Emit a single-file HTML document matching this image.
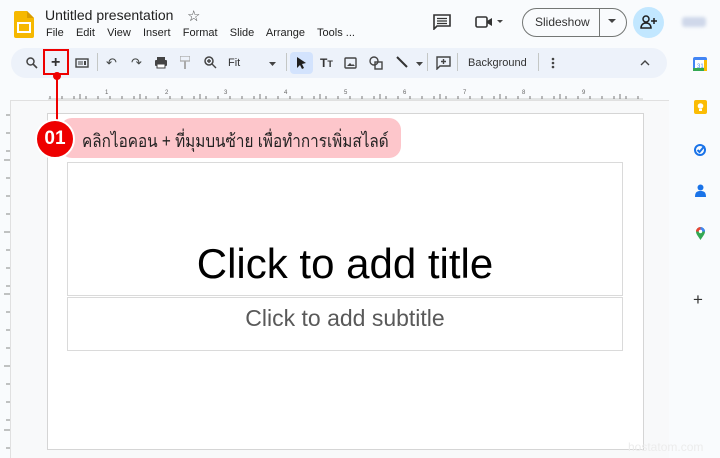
<!DOCTYPE html>
<html><head><meta charset="utf-8"><style>
*{margin:0;padding:0;box-sizing:border-box}
body{width:720px;height:458px;overflow:hidden;background:#f9fbfd;font-family:"Liberation Sans",Arial,sans-serif;position:relative;color:#444746}
.a{position:absolute}
.ic{position:absolute;font-size:13px;color:#444746}
svg{position:absolute}
</style></head><body>
<svg style="left:14px;top:11px" width="20" height="27" viewBox="0 0 20 27"><path d="M2 0h11l7 7v18a2 2 0 0 1-2 2H2a2 2 0 0 1-2-2V2a2 2 0 0 1 2-2z" fill="#f6b800"/><path d="M13 0v7h7z" fill="#d99c00"/><rect x="4" y="12" width="12" height="9" fill="none" stroke="#fff" stroke-width="2"/></svg>
<div class="a" style="left:45px;top:7px;font-size:14px;color:#1f1f1f">Untitled presentation</div>
<div class="a" style="left:187px;top:7px;font-size:15px;color:#444">☆</div>
<div class="a" style="left:46px;top:27px;font-size:11px;color:#1f1f1f;word-spacing:0">File&nbsp;&nbsp;&nbsp; Edit&nbsp;&nbsp;&nbsp; View&nbsp;&nbsp;&nbsp; Insert&nbsp;&nbsp;&nbsp; Format&nbsp;&nbsp;&nbsp; Slide&nbsp;&nbsp;&nbsp; Arrange&nbsp;&nbsp;&nbsp; Tools ...</div>
<svg style="left:433px;top:14px" width="18" height="16" viewBox="0 0 18 16"><path d="M1 1h16v11H4l-3 3z" fill="none" stroke="#333" stroke-width="1.6"/><path d="M4 4.5h10M4 7h10M4 9.5h10" stroke="#333" stroke-width="1.2"/></svg>
<svg style="left:475px;top:15px" width="30" height="14" viewBox="0 0 30 14"><rect x="1" y="2" width="11" height="10" rx="1.5" fill="none" stroke="#333" stroke-width="1.6"/><path d="M12 6l5-3v8l-5-3z" fill="#333"/><path d="M22 5h6l-3 3z" fill="#444"/></svg>
<div class="a" style="left:522px;top:8px;width:105px;height:29px;border:1px solid #747775;border-radius:15px"></div>
<div class="a" style="left:599px;top:8px;width:1px;height:29px;background:#747775"></div>
<div class="a" style="left:535px;top:15px;font-size:12px;color:#333">Slideshow</div>
<svg style="left:608px;top:19px" width="8" height="5"><path d="M0 0h8l-4 4z" fill="#444"/></svg>
<div class="a" style="left:633px;top:7px;width:31px;height:31px;border-radius:50%;background:#c2e7ff"></div>
<svg style="left:640px;top:15px" width="18" height="14" viewBox="0 0 18 14"><circle cx="6" cy="4" r="3" fill="none" stroke="#1f1f1f" stroke-width="1.5"/><path d="M1 13c0-3 2-5 5-5s5 2 5 5z" fill="none" stroke="#1f1f1f" stroke-width="1.5"/><path d="M14 3v6M11 6h6" stroke="#1f1f1f" stroke-width="1.5"/></svg>
<div class="a" style="left:682px;top:17px;width:24px;height:10px;background:#cfd8ea;border-radius:3px;filter:blur(1.5px)"></div>
<div class="a" style="left:11px;top:48px;width:656px;height:30px;border-radius:15px;background:#edf2fa"></div>
<svg style="left:26px;top:57px" width="12" height="12" viewBox="0 0 12 12"><circle cx="4.5" cy="4.5" r="3.5" fill="none" stroke="#444" stroke-width="1.5"/><path d="M7 7l4 4" stroke="#444" stroke-width="1.6"/></svg>
<div class="a" style="left:51px;top:54px;font-size:16px;color:#333;font-weight:bold">+</div>
<div class="a" style="left:43px;top:49px;width:26px;height:26px;border:2px solid #e00"></div>
<svg style="left:75px;top:58px" width="14" height="10"><rect x="1" y="1" width="12" height="8" fill="none" stroke="#444" stroke-width="1.4"/><path d="M3 4h5M3 6h5" stroke="#444"/><rect x="9" y="3" width="2" height="4" fill="#444"/></svg>
<div class="a" style="left:97px;top:53px;width:1px;height:18px;background:#c4c7c5"></div>
<div class="ic" style="left:106px;top:55px">↶</div>
<div class="ic" style="left:131px;top:55px">↷</div>
<svg style="left:154px;top:57px" width="14" height="12"><rect x="3" y="0" width="8" height="3" fill="#444"/><rect x="1" y="3" width="12" height="6" rx="1" fill="#444"/><rect x="3" y="7" width="8" height="4" fill="#fff" stroke="#444"/></svg>
<svg style="left:180px;top:56px" width="10" height="14"><rect x="0" y="0" width="10" height="5" fill="none" stroke="#aaa" stroke-width="1.3"/><path d="M5 5v8" stroke="#aaa" stroke-width="2"/></svg>
<svg style="left:204px;top:56px" width="13" height="13" viewBox="0 0 13 13"><circle cx="5" cy="5" r="4" fill="none" stroke="#444" stroke-width="1.5"/><path d="M8 8l4 4M3 5h4M5 3v4" stroke="#444" stroke-width="1.4"/></svg>
<div class="a" style="left:228px;top:57px;font-size:11px;color:#333">Fit</div>
<svg style="left:269px;top:62px" width="7" height="4"><path d="M0 0h7l-3.5 4z" fill="#444"/></svg>
<div class="a" style="left:286px;top:53px;width:1px;height:18px;background:#c4c7c5"></div>
<div class="a" style="left:290px;top:52px;width:23px;height:22px;border-radius:4px;background:#d3e3fd"></div>
<svg style="left:296px;top:56px" width="11" height="14"><path d="M1 1l9 6-4 1 2 4-2 1-2-4-3 3z" fill="#1f1f1f"/></svg>
<div class="a" style="left:320px;top:56px;font-size:12px;font-weight:bold;color:#333">T<span style="font-size:9px">T</span></div>
<svg style="left:344px;top:57px" width="13" height="12"><rect x="1" y="1" width="11" height="10" rx="1" fill="none" stroke="#444" stroke-width="1.4"/><path d="M3 9l3-3 2 2 1-1 2 2z" fill="#444"/></svg>
<svg style="left:369px;top:56px" width="15" height="14"><circle cx="5" cy="5" r="4" fill="none" stroke="#444" stroke-width="1.4"/><rect x="6" y="6" width="7" height="7" fill="none" stroke="#444" stroke-width="1.4"/></svg>
<svg style="left:396px;top:56px" width="12" height="12"><path d="M1 1l10 10" stroke="#333" stroke-width="2"/></svg>
<svg style="left:416px;top:62px" width="7" height="4"><path d="M0 0h7l-3.5 4z" fill="#444"/></svg>
<div class="a" style="left:427px;top:53px;width:1px;height:18px;background:#c4c7c5"></div>
<svg style="left:436px;top:56px" width="15" height="14"><path d="M1 1h13v9H4l-3 3z" fill="none" stroke="#444" stroke-width="1.4"/><path d="M7.5 3v5M5 5.5h5" stroke="#444" stroke-width="1.4"/></svg>
<div class="a" style="left:457px;top:53px;width:1px;height:18px;background:#c4c7c5"></div>
<div class="a" style="left:468px;top:57px;font-size:11px;color:#333">Background</div>
<div class="a" style="left:538px;top:53px;width:1px;height:18px;background:#c4c7c5"></div>
<svg style="left:551px;top:57px" width="4" height="12"><circle cx="2" cy="2" r="1.3" fill="#444"/><circle cx="2" cy="6" r="1.3" fill="#444"/><circle cx="2" cy="10" r="1.3" fill="#444"/></svg>
<svg style="left:640px;top:60px" width="10" height="6"><path d="M1 5l4-4 4 4" fill="none" stroke="#444" stroke-width="1.4"/></svg>
<svg style="left:0;top:86px" width="666" height="14">
<line x1="48" y1="13" x2="643" y2="13" stroke="#ccc"/>
<g stroke="#777" stroke-width="1">
<path d="M50 13v-3M62 13v-3M74 13v-3M80 13v-5M86 13v-3M98 13v-3M110 13v-3M122 13v-3M134 13v-3M140 13v-5M146 13v-3M158 13v-3M170 13v-3M182 13v-3M194 13v-3M200 13v-5M206 13v-3M218 13v-3M230 13v-3M242 13v-3M254 13v-3M260 13v-5M266 13v-3M278 13v-3M290 13v-3M302 13v-3M314 13v-3M320 13v-5M326 13v-3M338 13v-3M350 13v-3M362 13v-3M374 13v-3M380 13v-5M386 13v-3M398 13v-3M410 13v-3M422 13v-3M434 13v-3M440 13v-5M446 13v-3M458 13v-3M470 13v-3M482 13v-3M494 13v-3M500 13v-5M506 13v-3M518 13v-3M530 13v-3M542 13v-3M554 13v-3M560 13v-5M566 13v-3M578 13v-3M590 13v-3M602 13v-3M614 13v-3M620 13v-5M626 13v-3M638 13v-3"/></g>
<g font-size="6" fill="#666"><text x="105" y="8">1</text><text x="165" y="8">2</text><text x="224" y="8">3</text><text x="284" y="8">4</text><text x="344" y="8">5</text><text x="403" y="8">6</text><text x="463" y="8">7</text><text x="522" y="8">8</text><text x="582" y="8">9</text></g>
</svg>
<div class="a" style="left:10px;top:100px;width:659px;height:358px;background:#f8f9fa;border-top:1px solid #e0e0e0;border-left:1px solid #e0e0e0"></div>
<svg style="left:0;top:100px" width="10" height="358"><g stroke="#888"><path d="M6 15h4M6 33h4M6 51h4M4 60h6M6 78h4M6 96h4M6 114h4M4 132h6M6 150h4M6 168h4M6 186h4M4 194h6M6 212h4M6 230h4M6 248h4M4 266h6M6 284h4M6 302h4M6 320h4M4 330h6M6 348h4"/></g></svg>
<div class="a" style="left:47px;top:113px;width:597px;height:337px;background:#fff;border:1px solid #d5d5d5"></div>
<div class="a" style="left:67px;top:162px;width:556px;height:134px;border:1px solid #dadada"></div>
<div class="a" style="left:67px;top:297px;width:556px;height:54px;border:1px solid #dadada"></div>
<div class="a" style="left:67px;top:240px;width:556px;text-align:center;font-size:42px;color:#000">Click to add title</div>
<div class="a" style="left:67px;top:305px;width:556px;text-align:center;font-size:23px;color:#595959">Click to add subtitle</div>
<div class="a" style="left:56px;top:75px;width:2px;height:48px;background:#e00"></div>
<div class="a" style="left:53px;top:72px;width:8px;height:8px;border-radius:50%;background:#e00"></div>
<div class="a" style="left:60px;top:118px;width:341px;height:40px;border-radius:12px;background:#fdc6cb"></div>
<div class="a" style="left:82px;top:126px;font-size:18px;color:#222;font-family:'Liberation Sans','Noto Sans CJK SC','DejaVu Sans',sans-serif;white-space:nowrap;transform:scaleX(0.85);transform-origin:0 0">คลิกไอคอน + ที่มุมบนซ้าย เพื่อทำการเพิ่มสไลด์</div>
<div class="a" style="left:35px;top:119px;width:40px;height:40px;border-radius:50%;background:#e00;border:2px solid #fff;color:#fff;font-weight:bold;font-size:19px;text-align:center;line-height:36px">01</div>
<div class="a" style="left:669px;top:40px;width:51px;height:418px;background:#f9fbfd"></div>
<svg style="left:693px;top:57px" width="14" height="14"><rect width="14" height="14" rx="2" fill="#4285f4"/><rect x="2" y="3" width="10" height="9" fill="#fff"/><rect x="0" y="11" width="14" height="3" fill="#34a853"/><rect x="11" y="3" width="3" height="11" fill="#fbbc04"/><text x="4" y="11" font-size="6" fill="#4285f4">31</text></svg>
<svg style="left:694px;top:100px" width="13" height="14"><rect width="13" height="14" rx="2" fill="#fbbc04"/><circle cx="6.5" cy="6" r="2.8" fill="#fff"/><rect x="5" y="9" width="3" height="2" fill="#fff"/></svg>
<svg style="left:694px;top:143px" width="13" height="13"><circle cx="6" cy="7" r="5" fill="none" stroke="#1a73e8" stroke-width="2"/><path d="M3.5 7l2 2 5-6" fill="none" stroke="#1a73e8" stroke-width="2"/></svg>
<svg style="left:695px;top:184px" width="11" height="13"><circle cx="5.5" cy="3.5" r="3" fill="#1a73e8"/><path d="M0 13c0-5 2-6 5.5-6s5.5 1 5.5 6z" fill="#1a73e8"/></svg>
<svg style="left:695px;top:226px" width="11" height="15"><path d="M5.5 14C3 10 1 8 1 5.5a4.5 4.5 0 0 1 9 0C10 8 8 10 5.5 14z" fill="#34a853"/><path d="M1 5.5a4.5 4.5 0 0 1 4.5-4.5L5.5 5.5z" fill="#ea4335"/><path d="M5.5 1a4.5 4.5 0 0 1 4.5 4.5H5.5z" fill="#4285f4"/><circle cx="5.5" cy="5.5" r="1.7" fill="#fff"/></svg>
<div class="a" style="left:693px;top:290px;font-size:17px;color:#333">+</div>
<div class="a" style="left:628px;top:440px;font-size:12px;color:#ececec">hostatom.com</div>
</body></html>
